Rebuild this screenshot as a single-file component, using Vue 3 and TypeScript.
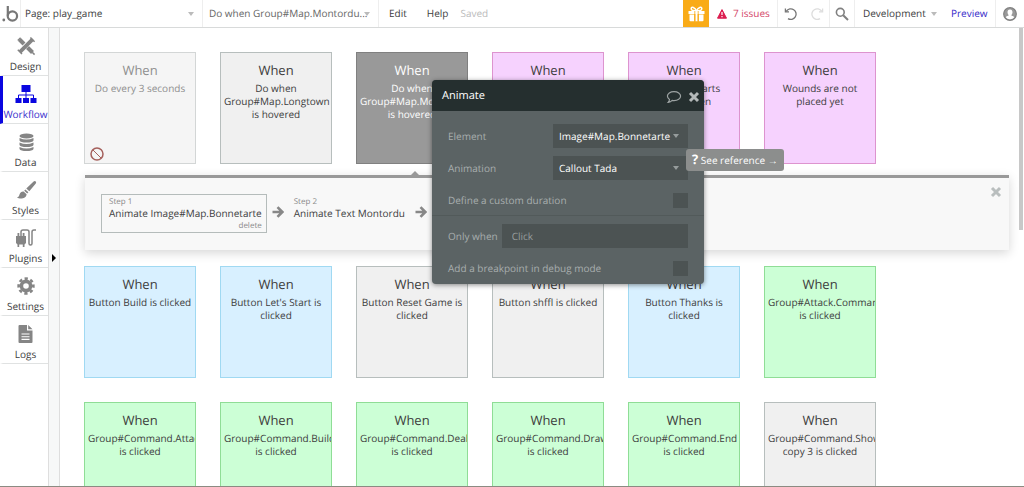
<script setup lang="ts">
import { ref } from 'vue'

type Tone = 'muted' | 'gray' | 'selected' | 'purple' | 'blue' | 'green'

interface EventCard {
  text: string
  tone: Tone
  disabled?: boolean
}

interface Tab {
  name: string
  icon: string
}

const tabs: Tab[] = [
  { name: 'Design', icon: 'design' },
  { name: 'Workflow', icon: 'workflow' },
  { name: 'Data', icon: 'data' },
  { name: 'Styles', icon: 'styles' },
  { name: 'Plugins', icon: 'plugins' },
  { name: 'Settings', icon: 'settings' },
  { name: 'Logs', icon: 'logs' },
]
const activeTab = ref('Workflow')

const topRow: EventCard[] = [
  { text: 'Do every 3 seconds', tone: 'muted', disabled: true },
  { text: 'Do when Group#Map.Longtown is hovered', tone: 'gray' },
  { text: 'Do when Group#Map.Montordu is hovered', tone: 'selected' },
  { text: '', tone: 'purple' },
  { text: 'New turn starts\nand is open', tone: 'purple' },
  { text: 'Wounds are not placed yet', tone: 'purple' },
]

const lowerRows: EventCard[] = [
  { text: 'Button Build is clicked', tone: 'blue' },
  { text: "Button Let's Start is clicked", tone: 'blue' },
  { text: 'Button Reset Game is clicked', tone: 'gray' },
  { text: 'Button shffl is clicked', tone: 'gray' },
  { text: 'Button Thanks is clicked', tone: 'blue' },
  { text: 'Group#Attack.Command is clicked', tone: 'green' },
  { text: 'Group#Command.Attack is clicked', tone: 'green' },
  { text: 'Group#Command.Build is clicked', tone: 'green' },
  { text: 'Group#Command.Deal is clicked', tone: 'green' },
  { text: 'Group#Command.Draw is clicked', tone: 'green' },
  { text: 'Group#Command.End is clicked', tone: 'green' },
  { text: 'Group#Command.Show copy 3 is clicked', tone: 'gray' },
]

const condition = ref('')
const customDuration = ref(false)
const breakpoint = ref(false)
</script>

<template>
  <div class="editor">
    <header class="topbar">
      <a class="logo" href="#" aria-label="Home">
        <svg width="17" height="18" viewBox="0 0 17 18">
          <circle cx="1.8" cy="15" r="1.4" fill="#777" />
          <path d="M5.8 1v9.6" fill="none" stroke="#777" stroke-width="2.2" />
          <circle cx="10.4" cy="11" r="4.7" fill="none" stroke="#777" stroke-width="2.2" />
        </svg>
      </a>
      <div class="picker page-picker">
        <select aria-label="Page"><option>Page: play_game</option></select>
        <svg class="caret" width="6" height="4" viewBox="0 0 6 4"><path d="M0 0h6L3 4z" /></svg>
      </div>
      <div class="picker event-picker">
        <select aria-label="Event"><option>Do when Group#Map.Montordu...</option></select>
        <svg class="caret" width="6" height="4" viewBox="0 0 6 4"><path d="M0 0h6L3 4z" /></svg>
      </div>
      <button class="menu" type="button">Edit</button>
      <button class="menu" type="button">Help</button>
      <span class="saved">Saved</span>
      <div class="spacer"></div>
      <button class="gift" type="button" aria-label="What's new">
        <svg width="17" height="16" viewBox="0 0 17 16">
          <g fill="#fff">
            <path d="M0.5 5h16v3h-16z" />
            <path d="M1.5 8.5h4.7v6.7H2.5q-1 0-1-1zM7.4 6h2.2v9.2H7.4zM10.8 8.5h4.7v5.7q0 1-1 1h-3.7z" />
          </g>
          <path d="M8.5 5C7 1.2 3.2 0 3.2 2.8 3.2 4.6 6 5 8.5 5c2.5 0 5.3-.4 5.3-2.2C13.8 0 10 1.2 8.5 5" fill="none" stroke="#fff" stroke-width="1.5" />
          <path d="M6.8 5v10M10.2 5v10" stroke="#f9ab17" stroke-width="0.8" />
        </svg>
      </button>
      <button class="issues" type="button">
        <svg width="10" height="10" viewBox="0 0 10 10">
          <path d="M5 .6 9.5 9.2H.5z" fill="#dc1e50" stroke="#dc1e50" stroke-linejoin="round" />
          <path d="M5 3v3M5 7v1.3" stroke="#fff" stroke-width="1.2" />
        </svg>
        7 issues
      </button>
      <div class="history">
        <button type="button" aria-label="Undo">
          <svg width="14" height="14" viewBox="0 0 14 14" fill="none" stroke="#777" stroke-width="1.3">
            <path d="M2.4 4.2A5.3 5.3 0 1 1 4 11.6M1.4 1.4v3.4h3.6" />
          </svg>
        </button>
        <button type="button" aria-label="Redo">
          <svg width="14" height="14" viewBox="0 0 14 14" fill="none" stroke="#ddd" stroke-width="1.3">
            <path d="M11.6 4.2A5.3 5.3 0 1 0 10 11.6M12.6 1.4v3.4H9" />
          </svg>
        </button>
      </div>
      <button class="search" type="button" aria-label="Search">
        <svg width="14" height="14" viewBox="0 0 14 14" fill="none" stroke="#808080">
          <circle cx="5.3" cy="5.3" r="3.9" stroke-width="1.6" />
          <path d="m8.2 8.2 4.8 4.8" stroke-width="2" />
        </svg>
      </button>
      <div class="picker version-picker">
        <select aria-label="Version"><option>Development</option></select>
        <svg class="caret" width="6" height="4" viewBox="0 0 6 4"><path d="M0 0h6L3 4z" /></svg>
      </div>
      <a class="preview" href="#">Preview</a>
      <button class="account" type="button" aria-label="Account">
        <svg width="14" height="14" viewBox="0 0 14 14">
          <circle cx="7" cy="7" r="6.3" fill="#999" stroke="#808080" stroke-width="1.2" />
          <path d="M7 2.5c1.7 0 2.5 1.2 2.5 2.7S8.5 7.8 8.3 8.2c.1.6 2.5.8 3 2.1A5.2 5.2 0 0 1 7 12.2a5.2 5.2 0 0 1-4.3-1.9c.5-1.3 2.9-1.5 3-2.1-.2-.4-1.2-1.5-1.2-3S5.3 2.5 7 2.5" fill="#fff" />
        </svg>
      </button>
    </header>

    <div class="workspace">
      <nav class="tabs" aria-label="Editor sections">
        <button
          v-for="tab in tabs"
          :key="tab.name"
          type="button"
          class="tab"
          :class="{ active: tab.name === activeTab }"
          @click="activeTab = tab.name"
        >
          <svg class="tab-icon" width="22" height="20" viewBox="0 0 22 20" fill="currentColor">
            <g v-if="tab.icon === 'design'" fill="none" stroke="currentColor">
              <path d="m4.5 3.5 13 13" stroke-width="4" />
              <path d="m2.8 4.5 2.8-2.8" stroke-width="1.5" />
              <path d="m17.5 3-13 13" stroke="#fff" stroke-width="5" />
              <path d="m17.8 3.2-13 13" stroke-width="3.8" />
              <path d="m15.4 1.5 4.2 4.2M2.8 13.8 7 18" stroke-width="1.5" />
              <path d="m17.2 16.2 2.4 2.4" stroke-width="1.5" />
            </g>
            <g v-else-if="tab.icon === 'workflow'">
              <path d="M6.500 1h9v7h-9zM.5 14h6v5h-6zM8 14h6v5H8zM15.500 14h6v5h-6z" />
              <path d="M11 8v6M3.500 14v-3h15v3" fill="none" stroke="currentColor" />
            </g>
            <g v-else-if="tab.icon === 'data'">
              <ellipse cx="11.500" cy="4" rx="7" ry="2.500" />
              <path d="M4.500 6q7 3.200 14 0v2.500q-1 2-7 2t-7-2zM4.500 10.500q7 3.200 14 0V13q-1 2-7 2t-7-2zM4.500 15q7 3.200 14 0v2q-1 2-7 2t-7-2z" />
            </g>
            <g v-else-if="tab.icon === 'styles'">
              <path d="M20.500 1.300q1.200.8.300 2.200l-6.500 7.800-3-2.700 7.300-7q1-.9 1.900-.3M10.400 9.500l3 2.700-1.200 1.200-3-2.600z" />
              <path d="M8.600 11.500l3 2.700c-.3 4.500-6.600 5.300-9.600 3.200 1.700-.3 1.900-1 2.500-2.900.7-2.300 2.300-3.200 4.100-3" />
            </g>
            <g v-else-if="tab.icon === 'plugins'">
              <path d="M1 8h10v7l-1.500 1.500V19H7.800v-2.500H4.200V19H2.500v-2.500L1 15zM2.500 5h1.800v3H2.500zM7.700 5h1.800v3H7.700z" />
              <path d="M6 8V4q0-2 2-2h4q2 0 2 2v11.500q0 1.500 1.500 1.500t1.500-1.500V4q0-2 2-2H21" fill="none" stroke="currentColor" stroke-width="1.500" />
            </g>
            <g v-else-if="tab.icon === 'settings'" fill="none" stroke="currentColor">
              <circle cx="11" cy="10" r="4.600" stroke-width="3.600" />
              <circle cx="11" cy="10" r="7.400" stroke-width="2.600" stroke-dasharray="3.200 2.611" transform="rotate(-12.400 11 10)" />
            </g>
            <g v-else>
              <path d="M4.500 1h7.500v5.500h5.500V18q0 1-1 1h-12q-1 0-1-1V2q0-1 1-1M13.200 1l4.300 4.300h-4.300z" />
              <path d="M6.500 10h8M6.500 12.700h8M6.500 15.400h8" stroke="#fff" stroke-width="1.100" />
            </g>
          </svg>
          <span>{{ tab.name }}</span>
        </button>
      </nav>

      <div class="rail">
        <button type="button" aria-label="Expand sidebar">
          <svg width="4" height="8" viewBox="0 0 4 8"><path d="M0 0v8l4-4z" /></svg>
        </button>
      </div>

      <main class="canvas">
        <section class="grid">
          <button v-for="(card, i) in topRow" :key="i" type="button" class="card" :class="card.tone">
            <span class="when">When</span>
            <span class="event">{{ card.text }}</span>
            <svg v-if="card.disabled" class="off" width="14" height="14" viewBox="0 0 14 14" fill="none" stroke="#a5605c">
              <circle cx="7" cy="7" r="6" stroke-width="1.5" />
              <path d="m3 3 8 8" />
            </svg>
          </button>
        </section>

        <section class="actions">
          <div class="step current">
            <span class="number">Step 1</span>
            <span class="action">Animate Image#Map.Bonnetarte</span>
            <button type="button" class="delete">delete</button>
          </div>
          <svg class="arrow" width="12" height="12" viewBox="0 0 12 12" fill="none" stroke="#888" stroke-width="2.6">
            <path d="M0.5 6h9.500M5.500 1.200 10.300 6l-4.800 4.800" />
          </svg>
          <div class="step">
            <span class="number">Step 2</span>
            <span class="action">Animate Text Montordu</span>
          </div>
          <svg class="arrow" width="12" height="12" viewBox="0 0 12 12" fill="none" stroke="#888" stroke-width="2.6">
            <path d="M0.5 6h9.500M5.500 1.200 10.300 6l-4.800 4.800" />
          </svg>
          <button type="button" class="close-actions" aria-label="Close actions">
            <svg width="12" height="12" viewBox="0 0 12 12" stroke="#b9bebe" stroke-width="3">
              <path d="m2 2 8 8M10 2l-8 8" />
            </svg>
          </button>
        </section>

        <section class="grid">
          <button v-for="(card, i) in lowerRows" :key="i" type="button" class="card" :class="card.tone">
            <span class="when">When</span>
            <span class="event">{{ card.text }}</span>
          </button>
        </section>
        <div class="thumb"></div>
      </main>
    </div>

    <form class="dialog" aria-label="Animate" @submit.prevent>
      <header class="dialog-head">
        <h2>Animate</h2>
        <button type="button" aria-label="Comment">
          <svg width="16" height="14" viewBox="0 0 16 14" fill="none" stroke="#9da3a3" stroke-width="1.2">
            <path d="M8 2.600c3.800 0 6.600 2 6.600 4.500S11.800 11.600 8 11.600q-1 0-1.800-.2Q4.600 13 2.200 13.400q1.200-1.200 1.300-2.900Q1.400 9.200 1.400 7.100c0-2.500 2.800-4.500 6.600-4.500z" />
          </svg>
        </button>
        <button type="button" aria-label="Close">
          <svg width="12" height="14" viewBox="0 0 12 14" stroke="#b3b8b8" stroke-width="3">
            <path d="m2 4 8 8M10 4l-8 8" />
          </svg>
        </button>
      </header>
      <div class="fields">
        <div class="field">
          <label for="element">Element</label>
          <div class="picker dark">
            <select id="element"><option>Image#Map.Bonnetarte</option></select>
            <svg class="caret" width="6" height="4" viewBox="0 0 6 4"><path d="M0 0h6L3 4z" /></svg>
          </div>
        </div>
        <div class="field">
          <label for="animation">Animation</label>
          <div class="picker dark">
            <select id="animation"><option>Callout Tada</option></select>
            <svg class="caret" width="6" height="4" viewBox="0 0 6 4"><path d="M0 0h6L3 4z" /></svg>
          </div>
        </div>
        <div class="field">
          <label for="duration">Define a custom duration</label>
          <input id="duration" v-model="customDuration" type="checkbox" />
        </div>
      </div>
      <div class="fields second">
        <div class="field">
          <label for="condition">Only when</label>
          <input id="condition" v-model="condition" type="text" placeholder="Click" />
        </div>
        <div class="field">
          <label for="breakpoint">Add a breakpoint in debug mode</label>
          <input id="breakpoint" v-model="breakpoint" type="checkbox" />
        </div>
      </div>
      <a class="reference" href="#"><b>?</b> See reference →</a>
    </form>
  </div>
</template>

<style>
html,
body {
  margin: 0;
  overflow: hidden;
}
</style>

<style scoped>
.editor,
.editor * {
  box-sizing: border-box;
}
.editor {
  position: relative;
  display: flex;
  flex-direction: column;
  height: 100vh;
  overflow: hidden;
  border-bottom: 1px solid #8b8b82;
  background: #fff;
  color: #3d3d3d;
  font: 10px/13px "Open Sans", "Noto Sans", sans-serif;
  text-rendering: geometricPrecision;
}
button,
select,
input {
  margin: 0;
  padding: 0;
  border: 0;
  border-radius: 0;
  background: none;
  color: inherit;
  font: inherit;
  text-rendering: inherit;
}
svg {
  display: block;
  flex: none;
}
a {
  color: inherit;
  text-decoration: none;
}

.topbar {
  display: flex;
  flex: none;
  align-items: stretch;
  height: 28px;
  border-bottom: 1px solid #d8dada;
}
.logo {
  display: flex;
  align-items: center;
  width: 21px;
  padding-left: 2px;
  border-right: 1px solid #eee;
}
.picker {
  display: grid;
  align-items: center;
}
.picker select,
.picker .caret {
  grid-area: 1 / 1;
}
.picker select {
  width: 100%;
  height: 100%;
  appearance: none;
}
.caret {
  justify-self: end;
  fill: #bbb;
  pointer-events: none;
}
.page-picker {
  width: 182px;
  padding: 0 8px 0 4px;
  border-right: 1px solid #eee;
}
.event-picker {
  width: 176px;
  padding: 0 8px 0 6px;
  border-right: 1px solid #eee;
  color: #666;
}
.menu {
  padding-left: 10px;
}
.menu + .menu {
  padding-left: 20px;
}
.saved {
  align-self: center;
  padding-left: 12px;
  color: #bbb;
}
.spacer {
  flex: 1;
}
.gift {
  display: grid;
  place-items: center;
  width: 26px;
  background: #f9ab17;
}
.issues {
  display: flex;
  align-items: center;
  gap: 6px;
  width: 69px;
  padding-left: 8px;
  border-right: 1px solid #eee;
  color: #d4486a;
  white-space: nowrap;
}
.history {
  display: flex;
  align-items: center;
  gap: 12px;
  width: 52px;
  padding-left: 6px;
  border-right: 1px solid #eee;
}
.search {
  display: grid;
  place-items: center;
  width: 25px;
  border-right: 1px solid #eee;
}
.version-picker {
  width: 82px;
  padding-left: 8px;
}
.preview {
  align-self: center;
  width: 58px;
  padding-left: 14px;
  color: #3529c9;
}
.account {
  display: grid;
  place-items: center;
  width: 29px;
  border-left: 1px solid #eee;
}

.workspace {
  display: flex;
  flex: 1;
  min-height: 0;
}
.tabs {
  flex: none;
  width: 48px;
}
.tab {
  display: flex;
  flex-direction: column;
  align-items: center;
  gap: 4px;
  width: 100%;
  height: 48px;
  padding-top: 8px;
  border-bottom: 1px solid #e0e2e2;
  border-left: 3px solid #fff;
}
.tab span {
  white-space: nowrap;
}
.tab-icon {
  color: #858585;
}
.tab.active {
  border-left-color: #0a06e0;
  color: #3a30cc;
}
.active .tab-icon {
  color: #0a06e0;
}
.rail {
  display: flex;
  flex: none;
  width: 12px;
  border: solid #dedede;
  border-width: 0 1px;
  background: #f7f8f8;
}
.rail button {
  align-self: flex-start;
  margin: 226px 0 0 3px;
}

.canvas {
  position: relative;
  flex: 1;
  min-width: 0;
  padding: 24px 15px 0 24px;
  overflow: hidden;
}
.grid {
  display: grid;
  grid-template-columns: repeat(auto-fill, 112px);
  gap: 24px;
}
.card {
  position: relative;
  display: flex;
  flex-direction: column;
  gap: 3px;
  height: 112px;
  padding: 8px 3px;
  overflow: hidden;
  border: 1px solid #b7bebd;
  background: #f0f0f0;
  text-align: center;
}
.when {
  font-size: 13px;
  line-height: 18px;
}
.event {
  white-space: pre-line;
}
.muted {
  border-color: #d3d6d6;
  background: #f5f5f5;
  color: #8f8f8f;
}
.selected {
  border-color: #808080;
  background: #999;
  color: #fff;
}
.purple {
  border-color: #dd94cf;
  background: #f6d2fe;
}
.blue {
  border-color: #a0d9f2;
  background: #d8f0ff;
}
.green {
  border-color: #8fdd96;
  background: #ccffd6;
}
.off {
  position: absolute;
  bottom: 2px;
  left: 5px;
}

.actions {
  position: relative;
  display: flex;
  align-items: flex-start;
  height: 75px;
  margin: 11px 0 16px 1px;
  padding: 16px 16px 0;
  border-top: 3px solid #999;
  background: #f8f8f8;
  box-shadow: 0 3px 10px rgb(0 0 0 / 16%);
}
.actions::before {
  position: absolute;
  bottom: 100%;
  left: 323px;
  border: solid transparent;
  border-width: 0 7px 7px;
  border-bottom-color: #999;
  content: "";
}
.step {
  display: flex;
  flex-direction: column;
  padding: 1px 4px 0 7px;
  border: 1px solid transparent;
  white-space: nowrap;
}
.current {
  height: 39px;
  border-color: #b5bcbb;
}
.number,
.delete {
  color: #8a8a8a;
  font-size: 8px;
  line-height: 11px;
}
.delete {
  align-self: flex-end;
}
.arrow {
  margin: 12px 2px 0 5px;
}
.close-actions {
  position: absolute;
  top: 8px;
  right: 7px;
}
.thumb {
  position: absolute;
  top: 0;
  right: 1px;
  width: 4px;
  height: 202px;
  background: #c8c8c8;
}

.dialog {
  position: absolute;
  top: 80px;
  left: 432px;
  width: 272px;
  border-radius: 4px;
  background: #5b6364;
  box-shadow: 0 1px 5px rgb(0 0 0 / 45%);
  color: #a8aeae;
}
.dialog-head {
  display: flex;
  align-items: center;
  gap: 6px;
  height: 31px;
  padding: 0 4px 0 10px;
  border-radius: 4px 4px 0 0;
  background: #252f2f;
}
h2 {
  flex: 1;
  margin: 0;
  color: #fff;
  font-size: 11px;
  font-weight: 400;
}
.fields {
  display: flex;
  flex-direction: column;
  gap: 8px;
  padding: 13px 16px 3px;
}
.second {
  padding: 8px 16px 4px;
  border-top: 1px solid #525a5a;
}
.field {
  display: flex;
  align-items: center;
  justify-content: space-between;
  gap: 4px;
  height: 24px;
}
.dark {
  width: 135px;
  height: 24px;
  padding: 0 9px 0 6px;
  background: #4c5353;
  color: #fff;
}
.dark .caret {
  fill: #969c9c;
}
input[type="text"] {
  flex: 1;
  min-width: 0;
  height: 24px;
  padding: 0 10px;
  background: #4c5353;
  color: #fff;
}
input::placeholder {
  color: #989e9e;
}
input[type="checkbox"] {
  width: 15px;
  height: 15px;
  appearance: none;
  background: #4c5353;
}
.reference {
  position: absolute;
  top: 69px;
  left: 254px;
  padding: 4px 6px;
  border-radius: 3px;
  background: #8c8e8d;
  color: #fff;
  white-space: nowrap;
}
.reference b {
  font-size: 13px;
  line-height: 12px;
}
</style>
